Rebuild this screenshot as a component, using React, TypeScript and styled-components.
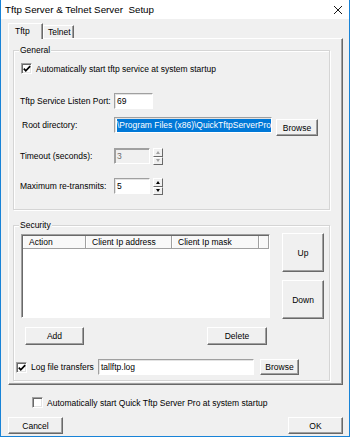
import styled, { createGlobalStyle } from "styled-components";

const GlobalStyle = createGlobalStyle`
    html, body {
        margin: 0;
        padding: 0;
        background: #f0f0f0;
    }
    * {
        box-sizing: border-box;
    }
`;

const Window = styled.div`
    width: 350px;
    height: 437px;
    background: #f0f0f0;
    border: 1px solid #1883d7;
    border-top: none;
    font-family: "Liberation Sans", Arial, sans-serif;
    font-size: 8.5px;
    color: #000;
    display: flex;
    flex-direction: column;
`;

const TitleBar = styled.div`
    height: 19px;
    background: #fff;
    display: flex;
    align-items: center;
    justify-content: space-between;
    padding: 0 6px 0 4px;
    font-size: 9.8px;
    white-space: pre;
`;

const Body = styled.div`
    padding: 4px 7px 0 7px;
    display: flex;
    flex-direction: column;
`;

const TabStrip = styled.div`
    display: flex;
    align-items: flex-end;
    height: 15px;
`;

const Tab = styled.div<{ $active?: boolean }>`
    height: ${(p) => (p.$active ? "16px" : "13px")};
    margin-bottom: ${(p) => (p.$active ? "-1px" : "0")};
    padding: ${(p) => (p.$active ? "2px 6px 0 6px" : "1px 4px 0 4px")};
    width: ${(p) => (p.$active ? "35px" : "31px")};
    background: #f0f0f0;
    border-top: 1px solid #fff;
    border-left: 1px solid #fff;
    border-right: 1px solid #696969;
    box-shadow: inset -1px 0 0 #a0a0a0;
    position: relative;
    z-index: 1;
`;

const Panel = styled.div`
    width: 335px;
    height: 347px;
    border-top: 1px solid #fff;
    border-left: 1px solid #fff;
    border-right: 1px solid #696969;
    border-bottom: 1px solid #696969;
    box-shadow: inset -1px -1px 0 #a0a0a0;
    padding: 0 0 0 4px;
    display: flex;
    flex-direction: column;
`;

const Group = styled.div<{ $top: number; $height: number }>`
    position: relative;
    width: 317px;
    height: ${(p) => p.$height}px;
    margin-top: ${(p) => p.$top}px;
    border: 1px solid #d5d5d5;
    box-shadow: inset 1px 1px 0 #fff, 1px 1px 0 #fff;
    display: flex;
    flex-direction: column;
`;

const Caption = styled.span`
    position: absolute;
    top: -6px;
    left: 5px;
    padding: 0 1px;
    background: #f0f0f0;
    line-height: 11px;
`;

const Row = styled.div<{ $top: number; $left?: number }>`
    display: flex;
    align-items: flex-start;
    margin-top: ${(p) => p.$top}px;
    padding-left: ${(p) => p.$left ?? 0}px;
`;

const Label = styled.span<{ $width?: number; $shift?: number }>`
    width: ${(p) => (p.$width ? `${p.$width}px` : "auto")};
    padding-left: ${(p) => p.$shift ?? 0}px;
    height: 16px;
    line-height: 16px;
    white-space: nowrap;
`;

const TextBox = styled.div<{ $width: number; $disabled?: boolean }>`
    width: ${(p) => p.$width}px;
    height: 16px;
    background: ${(p) => (p.$disabled ? "#f0f0f0" : "#fff")};
    color: ${(p) => (p.$disabled ? "#6d6d6d" : "#000")};
    border-top: 1px solid #a0a0a0;
    border-left: 1px solid #a0a0a0;
    border-right: 1px solid #fff;
    border-bottom: 1px solid #fff;
    box-shadow: inset 1px 1px 0 ${(p) => (p.$disabled ? "#a0a0a0" : "#e3e3e3")};
    padding: 0 2px;
    line-height: 14px;
    white-space: nowrap;
    overflow: hidden;
    display: flex;
`;

const Selected = styled.span`
    background: #0078d7;
    color: #fff;
    line-height: 12px;
    margin-top: 1px;
    flex-shrink: 0;
`;

const Button = styled.div<{ $width: number; $height: number; $left?: number; $top?: number }>`
    width: ${(p) => p.$width}px;
    height: ${(p) => p.$height}px;
    margin-left: ${(p) => p.$left ?? 0}px;
    margin-top: ${(p) => p.$top ?? 0}px;
    background: #f0f0f0;
    border-top: 1px solid #fff;
    border-left: 1px solid #fff;
    border-right: 1px solid #696969;
    border-bottom: 1px solid #696969;
    box-shadow: inset -1px -1px 0 #a0a0a0;
    display: flex;
    align-items: center;
    justify-content: center;
    flex-shrink: 0;
`;

const Spin = styled.div`
    margin-left: 3px;
    width: 10px;
    height: 17px;
    display: flex;
    flex-direction: column;
`;

const SpinPart = styled.div`
    height: 8.5px;
    background: #f0f0f0;
    border-top: 1px solid #fff;
    border-left: 1px solid #fff;
    border-right: 1px solid #696969;
    border-bottom: 1px solid #696969;
    display: flex;
    align-items: center;
    justify-content: center;
`;

const Box = styled.div<{ $top?: number }>`
    width: 11px;
    height: 11px;
    margin-top: ${(p) => p.$top ?? 0}px;
    margin-right: 4px;
    background: #fff;
    border-top: 1px solid #a0a0a0;
    border-left: 1px solid #a0a0a0;
    border-right: 1px solid #fff;
    border-bottom: 1px solid #fff;
    box-shadow: inset 1px 1px 0 #696969, inset -1px -1px 0 #e3e3e3;
    flex-shrink: 0;
    display: flex;
    align-items: center;
    justify-content: center;
`;

const CheckRow = styled.div<{ $top: number; $left: number }>`
    display: flex;
    align-items: center;
    height: 11px;
    margin-top: ${(p) => p.$top}px;
    padding-left: ${(p) => p.$left}px;
    white-space: nowrap;
`;

const ListView = styled.div`
    width: 249px;
    height: 84px;
    margin-left: 7px;
    margin-top: 1px;
    background: #fff;
    border-top: 1px solid #a0a0a0;
    border-left: 1px solid #a0a0a0;
    border-right: 1px solid #fff;
    border-bottom: 1px solid #fff;
    box-shadow: inset 1px 1px 0 #696969;
    padding: 1px 0 0 1px;
`;

const Header = styled.div`
    display: flex;
    height: 13px;
    border-bottom: 1px solid #a0a0a0;
`;

const HeadCell = styled.div<{ $width: number }>`
    width: ${(p) => p.$width}px;
    flex-shrink: 0;
    border-right: 1px solid #a0a0a0;
    border-left: 1px solid #fff;
    background: #f8f8f8;
    padding-left: 5px;
    line-height: 12px;
    white-space: nowrap;
`;

const Side = styled.div`
    display: flex;
    flex-direction: column;
    gap: 8px;
    margin-left: 12px;
`;

const Footer = styled.div`
    display: flex;
    justify-content: space-between;
    margin-top: 9px;
    width: 335px;
`;

function Check() {
    return (
        <svg width="8" height="8" viewBox="0 0 8 8">
            <polyline points="0.8,3.6 2.8,5.8 7.2,1.2" fill="none" stroke="#000" strokeWidth="1.7" />
        </svg>
    );
}

function Arrow({ up, disabled }: { up?: boolean; disabled?: boolean }) {
    return (
        <svg width="4" height="3" viewBox="0 0 4 3">
            <polygon points={up ? "2,0 4,3 0,3" : "0,0 4,0 2,3"} fill={disabled ? "#a0a0a0" : "#000"} />
        </svg>
    );
}

function Spinner({ disabled }: { disabled?: boolean }) {
    return (
        <Spin>
            <SpinPart><Arrow up disabled={disabled} /></SpinPart>
            <SpinPart><Arrow disabled={disabled} /></SpinPart>
        </Spin>
    );
}

function App() {
    return (
        <Window>
            <GlobalStyle />
            <TitleBar>
                <span>Tftp Server &amp; Telnet Server  Setup</span>
                <svg width="10" height="10" viewBox="0 0 10 10">
                    <path d="M1 1 L9 9 M9 1 L1 9" stroke="#000" strokeWidth="0.9" />
                </svg>
            </TitleBar>
            <Body>
                <TabStrip>
                    <Tab $active>Tftp</Tab>
                    <Tab>Telnet</Tab>
                </TabStrip>
                <Panel>
                    <Group $top={11} $height={160}>
                        <Caption>General</Caption>
                        <CheckRow $top={12} $left={7}>
                            <Box><Check /></Box>
                            Automatically start tftp service at system startup
                        </CheckRow>
                        <Row $top={19} $left={6}>
                            <Label $width={94}>Tftp Service Listen Port:</Label>
                            <TextBox $width={39}>69</TextBox>
                        </Row>
                        <Row $top={8} $left={6}>
                            <Label $width={94} $shift={2}>Root directory:</Label>
                            <TextBox $width={158}>
                                <Selected>\Program Files (x86)\QuickTftpServerPro</Selected>
                            </TextBox>
                            <Button $width={42} $height={17} $left={4} $top={2}>Browse</Button>
                        </Row>
                        <Row $top={12} $left={6}>
                            <Label $width={94}>Timeout (seconds):</Label>
                            <TextBox $width={36} $disabled>3</TextBox>
                            <Spinner disabled />
                        </Row>
                        <Row $top={13} $left={6}>
                            <Label $width={94}>Maximum re-transmits:</Label>
                            <TextBox $width={36}>5</TextBox>
                            <Spinner />
                        </Row>
                    </Group>
                    <Group $top={15} $height={156}>
                        <Caption>Security</Caption>
                        <Row $top={7}>
                            <ListView>
                                <Header>
                                    <HeadCell $width={63}>Action</HeadCell>
                                    <HeadCell $width={86}>Client Ip address</HeadCell>
                                    <HeadCell $width={87}>Client Ip mask</HeadCell>
                                    <HeadCell $width={10} />
                                </Header>
                            </ListView>
                            <Side>
                                <Button $width={42} $height={39}>Up</Button>
                                <Button $width={42} $height={39}>Down</Button>
                            </Side>
                        </Row>
                        <Row $top={8} $left={11}>
                            <Button $width={59} $height={18}>Add</Button>
                            <Button $width={60} $height={18} $left={123}>Delete</Button>
                        </Row>
                        <Row $top={14} $left={2}>
                            <Box $top={3}><Check /></Box>
                            <Label $width={67}>Log file transfers</Label>
                            <TextBox $width={156}>tallftp.log</TextBox>
                            <Button $width={39} $height={16} $left={6}>Browse</Button>
                        </Row>
                    </Group>
                </Panel>
                <CheckRow $top={12} $left={24}>
                    <Box />
                    Automatically start Quick Tftp Server Pro at system startup
                </CheckRow>
                <Footer>
                    <Button $width={55} $height={17}>Cancel</Button>
                    <Button $width={55} $height={17}>OK</Button>
                </Footer>
            </Body>
        </Window>
    );
}

export default App;
